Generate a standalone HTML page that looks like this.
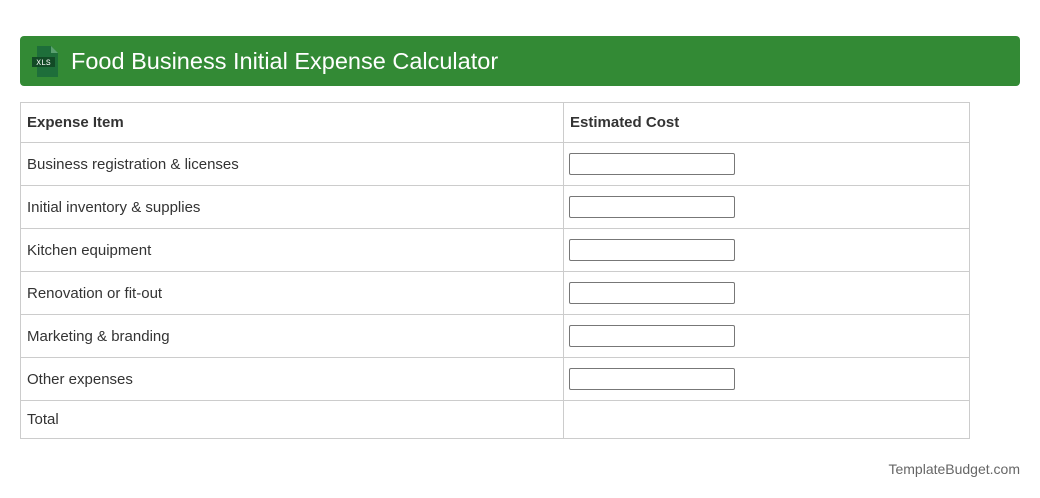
<html><head><style>
body{margin:0;background:#fff;font-family:"Liberation Sans",Arial,sans-serif;}
.hd{position:absolute;left:20px;top:36px;width:1000px;height:50px;background:#338a35;border-radius:4px;}
.hd span{position:absolute;left:51px;top:12px;color:#fff;font-size:23.5px;}
table{position:absolute;left:20px;top:102px;width:950px;border-collapse:collapse;font-size:15px;color:#333;}
td{border:1px solid #ccc;padding:0 6px;height:42px;box-sizing:border-box;}
tr{height:43px;}
td:first-child{width:543px;}
th{border:1px solid #ccc;text-align:left;padding:0 6px;height:40px;font-size:15px;color:#333;}
.i{display:block;width:164px;height:20px;border:1px solid #777;border-radius:2px;margin-left:-1px;}
.f{position:absolute;right:20px;top:461px;font-size:14px;color:#666;}
</style></head><body>
<div class="hd"><svg style="position:absolute;left:12px;top:10px" width="28" height="31" viewBox="0 0 28 31"><path d="M5 0h14l7 7v24H5z" fill="#1e6e3a"/><path d="M19 0v7h7z" fill="#5aa070"/><rect x="0" y="11" width="23" height="10" fill="#124a26"/><text x="11.5" y="19" font-size="8" fill="#fff" text-anchor="middle" font-family="Liberation Mono">XLS</text></svg><span>Food Business Initial Expense Calculator</span></div>
<table>
<tr style="height:40px"><th>Expense Item</th><th>Estimated Cost</th></tr>
<tr><td>Business registration &amp; licenses</td><td><span class="i"></span></td></tr>
<tr><td>Initial inventory &amp; supplies</td><td><span class="i"></span></td></tr>
<tr><td>Kitchen equipment</td><td><span class="i"></span></td></tr>
<tr><td>Renovation or fit-out</td><td><span class="i"></span></td></tr>
<tr><td>Marketing &amp; branding</td><td><span class="i"></span></td></tr>
<tr><td>Other expenses</td><td><span class="i"></span></td></tr>
<tr style="height:38px"><td style="height:38px">Total</td><td style="height:38px"></td></tr>
</table>
<div class="f">TemplateBudget.com</div>
</body></html>
